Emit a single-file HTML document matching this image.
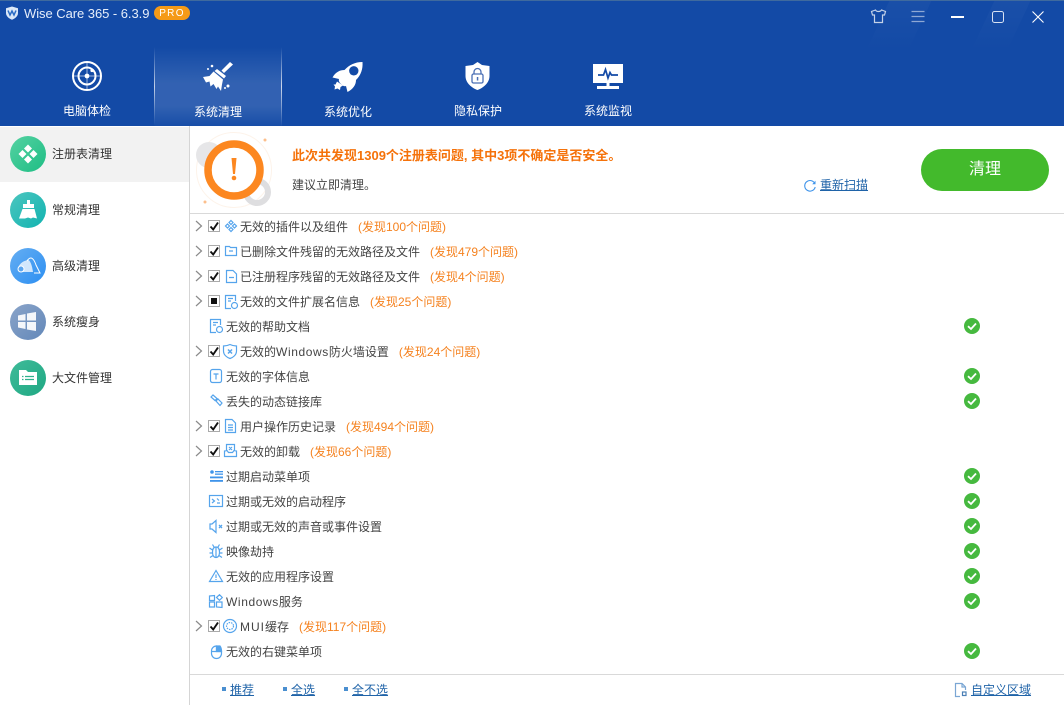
<!DOCTYPE html>
<html lang="zh"><head><meta charset="utf-8"><title>Wise Care 365</title>
<style>
*{box-sizing:border-box}
html,body{margin:0;padding:0;width:1064px;height:705px;overflow:hidden;background:#fff}
body{position:relative;font-family:"Liberation Sans","Noto Sans CJK SC",sans-serif;font-size:12px;color:#333}
.a{position:absolute}
svg{position:absolute;overflow:visible;display:block}
#top{left:0;top:0;width:1064px;height:126px;background:#134aa6;border-top:1px solid #3f6a9e;overflow:hidden}
.nav{position:absolute;width:80px;text-align:center;color:#fff;line-height:16px;font-size:12px}
.side{position:absolute;left:52px;line-height:16px;color:#333}
.c{position:absolute;left:10px;width:36px;height:36px;border-radius:50%}
.r{position:absolute;height:18px;line-height:18px;white-space:nowrap;color:#444}
.r b{font-weight:400;color:#f5821f;margin-left:10px}
.r i{font-style:normal;letter-spacing:.6px}
.arr{position:absolute;left:195px;width:8px;height:10px}
.cb{position:absolute;left:208px;width:12px;height:12px;border:1px solid #aaa;background:#fff}
.i{fill:none;stroke:#55a4ec;stroke-width:1.2}
.lk{position:absolute;color:#1f63a8;text-decoration:underline;line-height:16px;top:682px}
.sq{position:absolute;top:687px;width:4px;height:4px;background:#4a8fd0}
</style></head><body>
<div id="top" class="a">
 <div class="a" style="left:880px;top:-10px;width:42px;height:60px;transform:skewX(-25deg);background:linear-gradient(180deg,rgba(255,255,255,.035),rgba(255,255,255,0))"></div>
 <div class="a" style="left:985px;top:-10px;width:36px;height:60px;transform:skewX(-25deg);background:linear-gradient(180deg,rgba(255,255,255,.035),rgba(255,255,255,0))"></div>
 <div class="a" style="left:155px;top:46px;width:127px;height:79px;background:linear-gradient(180deg,rgba(255,255,255,0) 0,rgba(255,255,255,.13) 45%,rgba(255,255,255,.13) 75%,rgba(255,255,255,.02) 100%)"></div>
 <div class="a" style="left:154px;top:46px;width:1px;height:79px;background:linear-gradient(180deg,rgba(255,255,255,0),rgba(255,255,255,.75) 50%,rgba(255,255,255,0))"></div>
 <div class="a" style="left:281px;top:46px;width:1px;height:79px;background:linear-gradient(180deg,rgba(255,255,255,0),rgba(255,255,255,.75) 50%,rgba(255,255,255,0))"></div>
 <div class="a" style="left:24px;top:4px;color:#e6eefa;font-size:13px;letter-spacing:-.05px;line-height:18px;white-space:nowrap">Wise Care 365 - 6.3.9</div>
 <div class="a" style="left:154px;top:5px;width:36px;height:14px;border-radius:7px;background:#f59a17;color:#fff;font-size:10px;line-height:15px;text-align:center;letter-spacing:1.3px">PRO</div>
 <div class="nav" style="left:47px;top:102px">电脑体检</div>
 <div class="nav" style="left:178px;top:103px">系统清理</div>
 <div class="nav" style="left:308px;top:103px">系统优化</div>
 <div class="nav" style="left:438px;top:102px">隐私保护</div>
 <div class="nav" style="left:568px;top:102px">系统监视</div>
</div>
<!-- shield logo -->
<svg style="left:5px;top:6px" width="14" height="14" viewBox="0 0 14 14"><path d="M7 .5 13 2.200V7c0 3.300-3 5.600-6 6.700C4 12.600 1 10.300 1 7V2.200Z" fill="#dbe8f8"/><path d="M3 4.500 5 9 7 5 9 9 11 4.500" fill="none" stroke="#2b6cc4" stroke-width="1.500"/></svg>
<!-- window controls -->
<svg style="left:870px;top:9px" width="17" height="15" viewBox="0 0 17 15" fill="none" stroke="#c4d2e8" stroke-width="1.200"><path d="M5.500 1 1.500 2.500 2.500 6H4.500V13.500H12.500V6H14.500L15.500 2.500 11.500 1C10.500 3 6.500 3 5.500 1Z"/></svg>
<svg style="left:911px;top:10px" width="14" height="13" viewBox="0 0 14 13" stroke="#8ea8d4" stroke-width="1.300"><path d="M.5 1.500H13.500M.5 6.500H13.500M.5 11.500H13.500"/></svg>
<div class="a" style="left:951px;top:16px;width:13px;height:2px;background:#fff"></div>
<svg style="left:992px;top:11px" width="12" height="12" viewBox="0 0 12 12"><rect x=".5" y=".5" width="11" height="11" rx="2" fill="none" stroke="#d8e2f3" stroke-width="1"/></svg>
<svg style="left:1032px;top:11px" width="12" height="12" viewBox="0 0 12 12"><path d="M.5.5 11.500 11.500M11.500.5.500 11.500" stroke="#fff" stroke-width="1.100"/></svg>
<!-- nav icons -->
<svg style="left:72px;top:61px" width="30" height="30" viewBox="0 0 30 30" fill="none" stroke="#fff"><circle cx="15" cy="15" r="14" stroke-width="2"/><circle cx="15" cy="15" r="8.500" stroke-width="2"/><path d="M1 15H28M15 1V28" stroke-width="1" opacity=".6"/><circle cx="15" cy="15" r="2.400" fill="#fff" stroke="none"/><circle cx="20" cy="9.500" r="1.600" fill="#fff" stroke="none"/></svg>
<svg style="left:203px;top:61px" width="31" height="30" viewBox="0 0 31 30" fill="#fff"><path d="M27 1 30 3.500 21 12 18.500 9.500Z"/><path d="M14 8 23 15 21 17.500 11.500 10Z"/><path d="M10.500 10.500 20 18.500 19 23.500 18 30 15 25.500 13.500 28 10.500 23 7.500 25.500 6.500 20.500 3 21.500 0 16 6.500 15Z"/><circle cx="9" cy="5" r="1.300"/><circle cx="5" cy="8" r="1"/><circle cx="25" cy="25" r="1.500"/><circle cx="22" cy="27" r="1"/></svg>
<svg style="left:332px;top:62px" width="31" height="30" viewBox="0 0 31 30"><path d="M30.500 0C23 0 17 3 12.500 8 8 8 3.500 10 .5 15.500L7 17C6.500 18 7 20 8 21L10 23C11 24 13 24.500 14 24L15.500 30C21 27 24 23 24 18 29 13 31 7 30.500 0Z" fill="#fff"/><circle cx="21.800" cy="8.800" r="4.700" fill="#134aa6"/><path d="M5 19.500 3.500 22.500H1.500L3 24.500 2.500 27.500 5.500 26.500 8 28 8.500 25 11 23.500Z" fill="#fff"/></svg>
<svg style="left:465px;top:62px" width="25" height="28" viewBox="0 0 25 28"><path d="M12.500 0 17 3 24.500 4V14C24.500 21 18 26 12.500 28 7 26 .5 21 .5 14V4L8 3Z" fill="#fff"/><rect x="7" y="12" width="11" height="9" rx="1.500" fill="none" stroke="#4a6fb5" stroke-width="1.300"/><path d="M9 12V10a3.500 3.500 0 0 1 7 0V12" fill="none" stroke="#4a6fb5" stroke-width="1.300"/><rect x="11.800" y="15" width="1.500" height="3.500" fill="#4a6fb5"/></svg>
<svg style="left:593px;top:64px" width="30" height="26" viewBox="0 0 30 26"><rect width="30" height="19" fill="#fff"/><rect x="4" y="22" width="22" height="3" fill="#fff"/><rect x="13.500" y="19" width="3" height="3" fill="#fff"/><path d="M5 11H10.500L12.500 5.500 15 14 17 8.500 18.500 11H25" fill="none" stroke="#134aa6" stroke-width="1.700"/></svg>
<!-- sidebar -->
<div class="a" style="left:189px;top:126px;width:1px;height:579px;background:#d5d5d5"></div>
<div class="a" style="left:0;top:127px;width:189px;height:55px;background:#f2f2f2"></div>
<div class="c" style="top:136px;background:linear-gradient(135deg,#55d2a2,#1ebd84)"></div>
<div class="c" style="top:192px;background:linear-gradient(135deg,#4cc6bf,#11b3b0)"></div>
<div class="c" style="top:248px;background:linear-gradient(135deg,#65aef2,#2c8ff2)"></div>
<div class="c" style="top:304px;background:linear-gradient(135deg,#8aa4c9,#6388b9)"></div>
<div class="c" style="top:360px;background:linear-gradient(135deg,#3fbb99,#1fa883)"></div>
<svg style="left:18px;top:144px" width="20" height="20" viewBox="0 0 20 20" fill="#fff"><path d="M10 .5 14 4.500 10 8.500 6 4.500ZM4.500 6 8.500 10 4.500 14 .5 10ZM15.500 6 19.500 10 15.500 14 11.500 10ZM10 11.500 14 15.500 10 19.500 6 15.500Z"/></svg>
<svg style="left:19px;top:200px" width="18" height="20" viewBox="0 0 18 20" fill="#fff"><path d="M4 4H8V0H11V4H15V8H4Z"/><path d="M3.500 9H15.500L18 18.500 14 17.500 12 18.500 9 17.500 6 18.500 0 18.500Z"/></svg>
<svg style="left:16px;top:256px" width="26" height="20" viewBox="0 0 26 20" fill="none"><path d="M2 14C2 8 7 5 12 4 14 4 16 9 17 16H5" fill="#fff" fill-opacity=".75"/><path d="M11 5C15-1 18 3 20 9L24 17H18" stroke="#fff" stroke-width="1"/><circle cx="5" cy="13" r="3" fill="#5aa6f0" stroke="#fff" stroke-width="1"/></svg>
<svg style="left:18px;top:312px" width="18" height="19" viewBox="0 0 18 19" fill="#fff" fill-opacity=".92"><path d="M0 3.500 7.500 2V8.500H0ZM9 1.500 18 0V8.500H9ZM0 10H7.500V17L0 15.500ZM9 10H18V19L9 17.500Z"/></svg>
<svg style="left:19px;top:370px" width="18" height="16" viewBox="0 0 18 16"><path d="M0 0H7L9 2H18V15H0Z" fill="#fff"/><path d="M3 6.500H4.500M6 6.500H15M3 9.500H4.500M6 9.500H15" stroke="#2fb08d" stroke-width="1.300"/></svg>
<div class="side" style="top:146px">注册表清理</div>
<div class="side" style="top:202px">常规清理</div>
<div class="side" style="top:258px">高级清理</div>
<div class="side" style="top:314px">系统瘦身</div>
<div class="side" style="top:370px">大文件管理</div>
<!-- banner -->
<svg style="left:194px;top:130px" width="80" height="80" viewBox="0 0 80 80"><circle cx="40" cy="40" r="37.500" fill="#fff" stroke="#fdf3ea" stroke-width="1"/><circle cx="15" cy="25" r="13" fill="#e6e6e8"/><circle cx="63" cy="62" r="11" fill="none" stroke="#dedee0" stroke-width="6"/><circle cx="40" cy="40" r="26" fill="#fff" stroke="#fc8720" stroke-width="7.500"/><path d="M37.500 28H42.500L41 44H39Z" fill="#fc8720"/><circle cx="40" cy="48" r="2.300" fill="#fc8720"/><circle cx="71" cy="10" r="1.500" fill="#fcbf8c"/><circle cx="11" cy="72" r="1.500" fill="#fcbf8c"/></svg>
<div class="a" style="left:292px;top:147px;font-weight:700;font-size:13px;color:#f5720a;line-height:17px;white-space:nowrap">此次共发现1309个注册表问题, 其中3项不确定是否安全。</div>
<div class="a" style="left:292px;top:177px;color:#444;line-height:17px">建议立即清理。</div>
<svg style="left:804px;top:180px" width="12" height="12" viewBox="0 0 12 12" fill="none"><path d="M10.800 3.500A5.300 5.300 0 1 0 11.200 7" stroke="#3f94ea" stroke-width="1.100"/><path d="M11.500.8V4.200H8.200Z" fill="#3f94ea"/></svg>
<div class="a" style="left:820px;top:177px;color:#1f63a8;text-decoration:underline;line-height:16px">重新扫描</div>
<div class="a" style="left:921px;top:149px;width:128px;height:42px;border-radius:21px;background:#43ba2c;color:#fff;font-size:16px;line-height:42px;text-align:center">清理</div>
<div class="a" style="left:190px;top:213px;width:874px;height:1px;background:#d9d9d9"></div>
<div class="a" style="left:190px;top:674px;width:874px;height:1px;background:#d9d9d9"></div>
<svg width="0" height="0" style="left:0;top:0"><defs>
<g id="ar"><path d="M1 0 6.500 5 1 10" fill="none" stroke="#8a8a8a" stroke-width="1.200"/></g>
<g id="ck"><path d="M1.500 5.500 4.200 8.500 9 1.500" fill="none" stroke="#111" stroke-width="1.900"/></g>
<g id="ok"><circle cx="8" cy="8" r="8" fill="#46b93f"/><path d="M4 8.200 7 11 12 5.500" fill="none" stroke="#fff" stroke-width="1.800"/></g>
</defs></svg>
<svg class="arr" style="top:221px"><use href="#ar"/></svg><svg class="arr" style="top:246px"><use href="#ar"/></svg><svg class="arr" style="top:271px"><use href="#ar"/></svg><svg class="arr" style="top:296px"><use href="#ar"/></svg><svg class="arr" style="top:346px"><use href="#ar"/></svg><svg class="arr" style="top:421px"><use href="#ar"/></svg><svg class="arr" style="top:446px"><use href="#ar"/></svg><svg class="arr" style="top:621px"><use href="#ar"/></svg>
<div class="cb" style="top:220px"><svg width="10" height="10"><use href="#ck"/></svg></div>
<div class="cb" style="top:245px"><svg width="10" height="10"><use href="#ck"/></svg></div>
<div class="cb" style="top:270px"><svg width="10" height="10"><use href="#ck"/></svg></div>
<div class="cb" style="top:295px"><div class="a" style="left:2px;top:2px;width:6px;height:6px;background:#111"></div></div>
<div class="cb" style="top:345px"><svg width="10" height="10"><use href="#ck"/></svg></div>
<div class="cb" style="top:420px"><svg width="10" height="10"><use href="#ck"/></svg></div>
<div class="cb" style="top:445px"><svg width="10" height="10"><use href="#ck"/></svg></div>
<div class="cb" style="top:620px"><svg width="10" height="10"><use href="#ck"/></svg></div>
<!-- row icons -->
<svg class="i" style="left:225px;top:220px" width="12" height="12" viewBox="0 0 12 12"><path d="M6 .5 8 2.500 6 4.500 4 2.500ZM2.500 4 4.500 6 2.500 8 .5 6ZM9.500 4 11.500 6 9.500 8 7.500 6ZM6 7.500 8 9.500 6 11.500 4 9.500Z"/></svg>
<svg class="i" style="left:225px;top:245px" width="12" height="11" viewBox="0 0 12 11"><path d="M.5 1.500H4.500L5.500 2.500H11.500V10.500H.5ZM4 6H8"/></svg>
<svg class="i" style="left:226px;top:270px" width="11" height="13" viewBox="0 0 11 13"><path d="M.5.5H7L10.500 4V12.500H.5ZM3 7.500H8"/></svg>
<svg class="i" style="left:225px;top:295px" width="13" height="14" viewBox="0 0 13 14"><path d="M6 13.500H.5V.5H10.500V6M3 3.500H8M3 6H6"/><circle cx="9.500" cy="10.500" r="3"/></svg>
<svg class="i" style="left:210px;top:319px" width="13" height="14" viewBox="0 0 13 14"><path d="M6 13.500H.5V.5H10.500V6M3 3.500H8M3 6H6"/><circle cx="9.500" cy="10.500" r="3"/></svg>
<svg class="i" style="left:223px;top:344px" width="14" height="15" viewBox="0 0 14 15"><path d="M7 .5C9 1.500 11 2 13.500 2V7C13.500 11 10 13.500 7 14.500 4 13.500.5 11 .5 7V2C3 2 5 1.500 7 .5Z"/><path d="M5 5.500 9 9.500M9 5.500 5 9.500" stroke-width="1.500"/></svg>
<svg class="i" style="left:210px;top:369px" width="12" height="14" viewBox="0 0 12 14"><rect x=".5" y=".5" width="11" height="13" rx="2"/><path d="M3.500 5H8.500M6 5V10.500"/></svg>
<svg class="i" style="left:210px;top:394px" width="13" height="13" viewBox="0 0 13 13"><path d="M1 3 3 1 7 4.500 5 6.500ZM6 7 8 5 12 9 10 11.500Z"/></svg>
<svg class="i" style="left:225px;top:419px" width="11" height="14" viewBox="0 0 11 14"><path d="M.5.5H7L10.500 4V13.500H.5ZM3 6H8M3 8.500H8M3 11H8"/></svg>
<svg class="i" style="left:224px;top:444px" width="13" height="13" viewBox="0 0 13 13"><path d="M2.500 6.500V.5H10.500V6.500M.5 7V12.500H12.500V7L10 6.500 8.500 8.500H4.500L3 6.500ZM5 3 8 6M8 3 5 6"/></svg>
<svg style="left:210px;top:470px" width="13" height="12" viewBox="0 0 13 12" fill="#3f94ea"><circle cx="2" cy="2" r="1.800"/><rect x="5" y="1" width="8" height="1.300"/><rect x="5" y="3.500" width="8" height="1.300"/><rect y="6.500" width="13" height="1.800"/><rect y="10" width="13" height="1.800"/></svg>
<svg class="i" style="left:209px;top:495px" width="14" height="12" viewBox="0 0 14 12"><rect x=".5" y=".5" width="13" height="11"/><path d="M3 4 5.500 6 3 8M8 8H11M8 3.500 10 5.500"/></svg>
<svg class="i" style="left:209px;top:520px" width="14" height="13" viewBox="0 0 14 13"><path d="M1 4H3L7 .5V12.500L3 9H1Z"/><path d="M10 5 13 8M13 5 10 8" stroke-width="1.300"/></svg>
<svg class="i" style="left:209px;top:544px" width="14" height="14" viewBox="0 0 14 14"><path d="M7 3C4 3 3.500 6 3.500 8.500 3.500 11.500 5 13.500 7 13.500S10.500 11.500 10.500 8.500C10.500 6 10 3 7 3ZM7 3V13.500M5 3 3.500.5M9 3 10.500.5M3.500 6 .5 4M10.500 6 13.500 4M3.500 9H.5M10.500 9H13.500M4 11.500 1 13.500M10 11.500 13 13.500"/></svg>
<svg class="i" style="left:209px;top:570px" width="14" height="12" viewBox="0 0 14 12"><path d="M7 .5 13.500 11.500H.5ZM7 4.500V8M7 9V10"/></svg>
<svg class="i" style="left:209px;top:594px" width="14" height="14" viewBox="0 0 14 14"><path d="M.5 2 5.500 1.500V6.500H.5ZM7.500 3.500 10.500.7 13.300 3.500 10.500 6.300ZM.5 8H5.500V13H.5ZM7.500 8H13V13.500L7.500 13Z"/></svg>
<svg class="i" style="left:223px;top:619px" width="14" height="14" viewBox="0 0 14 14"><circle cx="7" cy="7" r="6.500"/><circle cx="7" cy="7" r="3.500" stroke-dasharray="1.500 1"/></svg>
<svg class="i" style="left:211px;top:644px" width="11" height="15" viewBox="0 0 11 15"><rect x=".5" y="2" width="10" height="12.500" rx="5"/><path d="M.5 7.500H10.500M5.500 2V7.500"/><path d="M5.500 2H9Q10.500 4 10.500 7.500H5.500Z" fill="#55a4ec"/></svg>
<!-- row text -->
<div class="a" style="left:0;top:1px">
<div class="r" style="left:240px;top:217px">无效的插件以及组件<b>(发现100个问题)</b></div>
<div class="r" style="left:240px;top:242px">已删除文件残留的无效路径及文件<b>(发现479个问题)</b></div>
<div class="r" style="left:240px;top:267px">已注册程序残留的无效路径及文件<b>(发现4个问题)</b></div>
<div class="r" style="left:240px;top:292px">无效的文件扩展名信息<b>(发现25个问题)</b></div>
<div class="r" style="left:226px;top:317px">无效的帮助文档</div>
<div class="r" style="left:240px;top:342px">无效的<i>Windows</i>防火墙设置<b>(发现24个问题)</b></div>
<div class="r" style="left:226px;top:367px">无效的字体信息</div>
<div class="r" style="left:226px;top:392px">丢失的动态链接库</div>
<div class="r" style="left:240px;top:417px">用户操作历史记录<b>(发现494个问题)</b></div>
<div class="r" style="left:240px;top:442px">无效的卸载<b>(发现66个问题)</b></div>
<div class="r" style="left:226px;top:467px">过期启动菜单项</div>
<div class="r" style="left:226px;top:492px">过期或无效的启动程序</div>
<div class="r" style="left:226px;top:517px">过期或无效的声音或事件设置</div>
<div class="r" style="left:226px;top:542px">映像劫持</div>
<div class="r" style="left:226px;top:567px">无效的应用程序设置</div>
<div class="r" style="left:226px;top:592px"><i>Windows</i>服务</div>
<div class="r" style="left:240px;top:617px"><i style="letter-spacing:1px">MUI</i>缓存<b>(发现117个问题)</b></div>
<div class="r" style="left:226px;top:642px">无效的右键菜单项</div>
</div>
<!-- ok marks -->
<svg style="left:964px;top:318px" width="16" height="16"><use href="#ok"/></svg>
<svg style="left:964px;top:368px" width="16" height="16"><use href="#ok"/></svg>
<svg style="left:964px;top:393px" width="16" height="16"><use href="#ok"/></svg>
<svg style="left:964px;top:468px" width="16" height="16"><use href="#ok"/></svg>
<svg style="left:964px;top:493px" width="16" height="16"><use href="#ok"/></svg>
<svg style="left:964px;top:518px" width="16" height="16"><use href="#ok"/></svg>
<svg style="left:964px;top:543px" width="16" height="16"><use href="#ok"/></svg>
<svg style="left:964px;top:568px" width="16" height="16"><use href="#ok"/></svg>
<svg style="left:964px;top:593px" width="16" height="16"><use href="#ok"/></svg>
<svg style="left:964px;top:643px" width="16" height="16"><use href="#ok"/></svg>
<!-- footer -->
<div class="sq" style="left:222px"></div><div class="lk" style="left:230px">推荐</div>
<div class="sq" style="left:283px"></div><div class="lk" style="left:291px">全选</div>
<div class="sq" style="left:344px"></div><div class="lk" style="left:352px">全不选</div>
<svg class="i" style="left:955px;top:683px;stroke:#7aa6d4" width="12" height="14" viewBox="0 0 12 14"><path d="M5 13.500H.5V.5H7L10.500 4V7M7 .5V4H10.500"/><rect x="7.500" y="9" width="3.500" height="3.500" stroke="#4a7fb5"/></svg>
<div class="lk" style="left:971px">自定义区域</div>
</body></html>
